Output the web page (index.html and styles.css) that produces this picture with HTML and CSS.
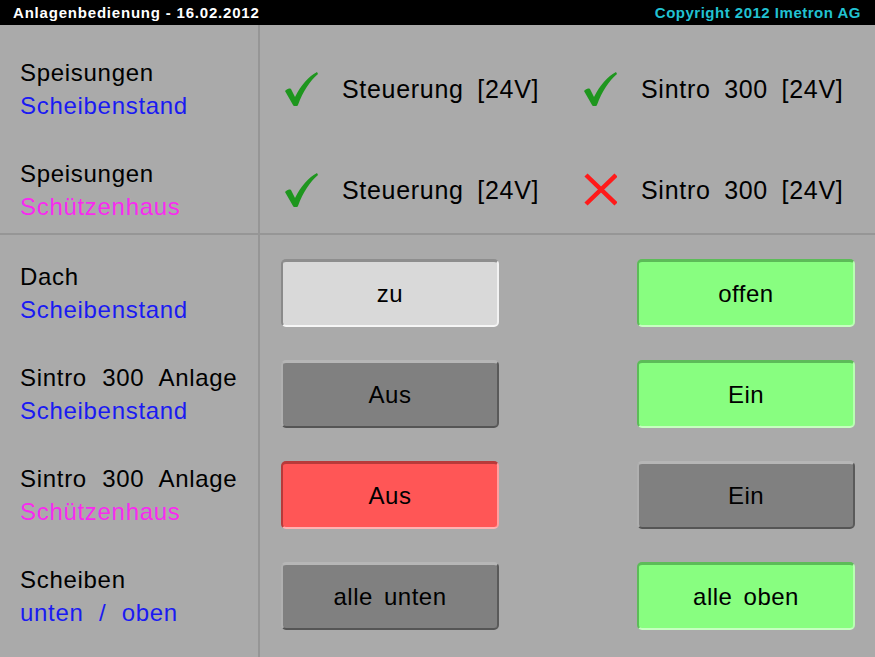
FILE: index.html
```html
<!DOCTYPE html>
<html lang="de">
<head>
<meta charset="utf-8">
<title>Anlagenbedienung</title>
<link rel="stylesheet" href="styles.css">
</head>
<body>
<div class="screen">
  <header class="titlebar">
    <span class="title">Anlagenbedienung - 16.02.2012</span>
    <span class="copy">Copyright 2012 Imetron AG</span>
  </header>

  <section class="section top">
    <div class="labels">
      <div class="row label"><span>Speisungen</span><span class="blue">Scheibenstand</span></div>
      <div class="row label"><span>Speisungen</span><span class="magenta">Schützenhaus</span></div>
    </div>
    <div class="content status">
      <div class="row status-row">
        <div class="item">
          <svg class="icon" viewBox="0 0 34 34"><path class="ok" d="M1 19 C3 17 5 16 7 17 L11 25 C17 13 24 5 33 0 L34 2 C26 9 19 19 14 33 C13 35 10 35 9 33 Z"/></svg>
          <span>Steuerung [24V]</span>
        </div>
        <div class="item">
          <svg class="icon" viewBox="0 0 34 34"><path class="ok" d="M1 19 C3 17 5 16 7 17 L11 25 C17 13 24 5 33 0 L34 2 C26 9 19 19 14 33 C13 35 10 35 9 33 Z"/></svg>
          <span>Sintro 300 [24V]</span>
        </div>
      </div>
      <div class="row status-row">
        <div class="item">
          <svg class="icon" viewBox="0 0 34 34"><path class="ok" d="M1 19 C3 17 5 16 7 17 L11 25 C17 13 24 5 33 0 L34 2 C26 9 19 19 14 33 C13 35 10 35 9 33 Z"/></svg>
          <span>Steuerung [24V]</span>
        </div>
        <div class="item">
          <svg class="icon" viewBox="0 0 34 34"><path class="fail" d="M3 2 L33 31 M33 2 L3 31"/></svg>
          <span>Sintro 300 [24V]</span>
        </div>
      </div>
    </div>
  </section>

  <section class="section bottom">
    <div class="labels">
      <div class="row label"><span>Dach</span><span class="blue">Scheibenstand</span></div>
      <div class="row label"><span>Sintro 300 Anlage</span><span class="blue">Scheibenstand</span></div>
      <div class="row label"><span>Sintro 300 Anlage</span><span class="magenta">Schützenhaus</span></div>
      <div class="row label"><span>Scheiben</span><span class="blue">unten / oben</span></div>
    </div>
    <div class="content buttons">
      <div class="row btn-row"><div class="btn light">zu</div><div class="btn green">offen</div></div>
      <div class="row btn-row"><div class="btn gray">Aus</div><div class="btn green">Ein</div></div>
      <div class="row btn-row"><div class="btn red">Aus</div><div class="btn gray">Ein</div></div>
      <div class="row btn-row"><div class="btn gray">alle unten</div><div class="btn green">alle oben</div></div>
    </div>
  </section>
</div>
</body>
</html>
```
FILE: styles.css
```css
html, body {
  margin: 0;
  padding: 0;
}
body {
  width: 875px;
  height: 657px;
  overflow: hidden;
  background: #aaaaaa;
  font-family: "Liberation Sans", Arial, sans-serif;
  color: #000;
}
.screen {
  width: 875px;
  height: 657px;
  display: flex;
  flex-direction: column;
  background: #aaaaaa;
}
.titlebar {
  height: 25px;
  flex: none;
  background: #000;
  display: flex;
  align-items: center;
  justify-content: space-between;
  padding: 0 14px 0 13px;
  font-weight: bold;
  font-size: 15px;
  letter-spacing: 0.8px;
}
.title { color: #ffffff; }
.copy { color: #22c2d2; letter-spacing: 0.5px; }

.section {
  display: flex;
  flex: none;
}
.section.top { height: 208px; }
.section.bottom {
  height: 420px;
  border-top: 2px solid #969696;
  flex: 1;
}
.labels {
  width: 238px;
  padding-left: 20px;
  border-right: 2px solid #969696;
  display: flex;
  flex-direction: column;
  gap: 33px;
  flex: none;
}
.content {
  flex: 1;
  display: flex;
  flex-direction: column;
  gap: 33px;
}
.top .labels, .top .content { padding-top: 30px; }
.bottom .labels, .bottom .content { padding-top: 24px; }

.row {
  height: 68px;
  flex: none;
  display: flex;
  align-items: center;
}
.label {
  flex-direction: column;
  align-items: flex-start;
  justify-content: center;
  font-size: 24px;
  line-height: 33px;
  letter-spacing: 0.7px;
  word-spacing: 8px;
  white-space: nowrap;
}
.blue { color: #1a1af2; }
.magenta { color: #f82af0; }

.status { padding-left: 24px; }
.status-row {
  display: grid;
  grid-template-columns: 299px auto;
  align-items: center;
}
.item {
  display: flex;
  align-items: center;
  gap: 24px;
  font-size: 25px;
  letter-spacing: 0.7px;
  word-spacing: 6px;
  white-space: nowrap;
}
.icon {
  width: 34px;
  height: 34px;
  flex: none;
}
.ok { fill: #1e961e; }
.fail {
  stroke: #ff1a1a;
  stroke-width: 4.5;
  fill: none;
}

.buttons { padding: 24px 20px 0 21px; }
.btn-row { justify-content: space-between; }
.btn {
  box-sizing: border-box;
  width: 218px;
  height: 68px;
  border-radius: 5px;
  border: 2px solid;
  border-top-width: 3px;
  display: flex;
  align-items: center;
  justify-content: center;
  font-size: 24px;
  letter-spacing: 0.5px;
  word-spacing: 4px;
  color: #000;
}
.btn.light {
  background: #d9d9d9;
  border-color: #8e8e8e #f2f2f2 #f6f6f6 #8a8a8a;
}
.btn.green {
  background: #88fe80;
  border-color: #5cbc58 #b8ffb2 #c6ffc0 #5cbc58;
}
.btn.red {
  background: #ff5656;
  border-color: #b83a3a #ffa0a0 #ffb2b2 #b83a3a;
}
.btn.gray {
  background: #808080;
  border-color: #b6b6b6 #5a5a5a #555555 #b0b0b0;
}
```
